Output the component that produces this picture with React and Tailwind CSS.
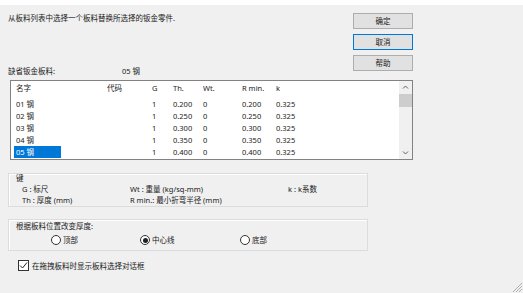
import React from "react";

const rows = [
  { name: "01 钢", th: "0.200", r: "0.200" },
  { name: "02 钢", th: "0.250", r: "0.250" },
  { name: "03 钢", th: "0.300", r: "0.300" },
  { name: "04 钢", th: "0.350", r: "0.350" },
  { name: "05 钢", th: "0.400", r: "0.400", selected: true },
];

const cols = "grid grid-cols-[96px_45px_21px_30px_39px_34px_1fr]";

const Button = ({ label, active }) => (
  <div
    className={`w-[60px] h-[16px] flex items-center justify-center bg-[#e1e1e1] border ${
      active ? "border-[#0078d7] shadow-[inset_0_0_0_1px_#e1e1e1]" : "border-[#adadad]"
    }`}
  >
    {label}
  </div>
);

const Radio = ({ label, checked, className = "" }) => (
  <div className={`flex items-center gap-[2px] ${className}`}>
    <div className="w-[10px] h-[10px] rounded-full border border-[#333] bg-white flex items-center justify-center">
      {checked && <div className="w-[5px] h-[5px] rounded-full bg-[#222]" />}
    </div>
    <span>{label}</span>
  </div>
);

export default function App() {
  return (
    <div
      className="relative w-[523px] h-[293px] overflow-hidden bg-[#f0f0f0] text-[7.5px] leading-[10px] text-[#1a1a1a]"
      style={{ fontFamily: '"Noto Sans", "Noto Sans CJK SC", sans-serif' }}
    >
      <div className="h-[5px] bg-white" />

      <div className="flex pl-[8px]">
        <div className="w-[345px]">
          <div className="mt-[8px] h-[10px]">从板料列表中选择一个板料替换所选择的钣金零件.</div>
          <div className="mt-[43px] h-[10px] flex">
            <span className="w-[114px]">缺省钣金板料:</span>
            <span>05 钢</span>
          </div>
          <div className="h-[4px]" />
        </div>
        <div className="pt-[8px] flex flex-col gap-[5px]">
          <Button label="确定" />
          <Button label="取消" active />
          <Button label="帮助" />
        </div>
      </div>

      {/* material list */}
      <div className="ml-[10px] w-[403px] h-[80px] border border-[#828282] bg-white flex">
        <div className="flex-1 pt-[1px]">
          <div className={`${cols} h-[12px] items-center`}>
            <span className="pl-[5px]">名字</span>
            <span>代码</span>
            <span>G</span>
            <span>Th.</span>
            <span>Wt.</span>
            <span>R min.</span>
            <span>k</span>
          </div>
          <div className="h-[4px]" />
          {rows.map((row) => (
            <div key={row.name} className={`${cols} h-[12px] items-center`}>
              <span>
                {row.selected ? (
                  <span className="ml-[3px] w-[47px] h-[12px] pl-[2px] flex items-center bg-[#0078d7] text-white">
                    {row.name}
                  </span>
                ) : (
                  <span className="pl-[5px]">{row.name}</span>
                )}
              </span>
              <span />
              <span>1</span>
              <span>{row.th}</span>
              <span>0</span>
              <span>{row.r}</span>
              <span>0.325</span>
            </div>
          ))}
        </div>
        <div className="w-[13px] bg-[#f0f0f0] flex flex-col items-center">
          <svg width="13" height="13" viewBox="0 0 13 13" className="shrink-0">
            <path d="M4 7.5 L6.5 5 L9 7.5" fill="none" stroke="#606060" strokeWidth="1" />
          </svg>
          <div className="w-[13px] h-[13px] bg-[#cdcdcd]" />
          <div className="flex-1" />
          <svg width="13" height="13" viewBox="0 0 13 13" className="shrink-0">
            <path d="M4 5.5 L6.5 8 L9 5.5" fill="none" stroke="#606060" strokeWidth="1" />
          </svg>
        </div>
      </div>

      {/* legend */}
      <div className="mt-[13px] ml-[8px] w-[360px] h-[34px] border border-[#dcdcdc] shadow-[inset_1px_1px_0_#fff] pl-[7px]">
        <div className="h-[10px] mt-[-1px]">键</div>
        <div className="flex h-[11px] items-center">
          <span className="ml-[6px] w-[108px]">G : 标尺</span>
          <span className="w-[158px]">Wt : 重量 (kg/sq-mm)</span>
          <span>k : k系数</span>
        </div>
        <div className="flex h-[11px] items-center">
          <span className="ml-[6px] w-[108px]">Th : 厚度 (mm)</span>
          <span>R min.: 最小折弯半径 (mm)</span>
        </div>
      </div>

      {/* thickness position */}
      <div className="mt-[12px] ml-[8px] w-[360px] h-[32px] border border-[#dcdcdc] shadow-[inset_1px_1px_0_#fff] pl-[7px]">
        <div className="h-[10px] mt-[1px]">根据板料位置改变厚度:</div>
        <div className="flex h-[12px] mt-[3px] items-center">
          <Radio label="顶部" className="ml-[35px] w-[89px]" />
          <Radio label="中心线" checked className="w-[100px]" />
          <Radio label="底部" />
        </div>
      </div>

      {/* checkbox */}
      <div className="mt-[9px] ml-[18px] flex items-center gap-[3px]">
        <div className="w-[11px] h-[11px] border border-[#333] bg-white flex items-center justify-center">
          <svg width="9" height="9" viewBox="0 0 9 9">
            <path d="M1 4.5 L3.5 7 L8 1.5" fill="none" stroke="#222" strokeWidth="1" />
          </svg>
        </div>
        <span>在拖拽板料时显示板料选择对话框</span>
      </div>

      {/* resize grip */}
      <svg width="10" height="10" viewBox="0 0 10 10" className="absolute right-0 bottom-0">
        <path d="M9 3 L3 9 M9 6 L6 9 M9 0 L0 9" stroke="#b0b0b0" strokeWidth="1" />
      </svg>
    </div>
  );
}
